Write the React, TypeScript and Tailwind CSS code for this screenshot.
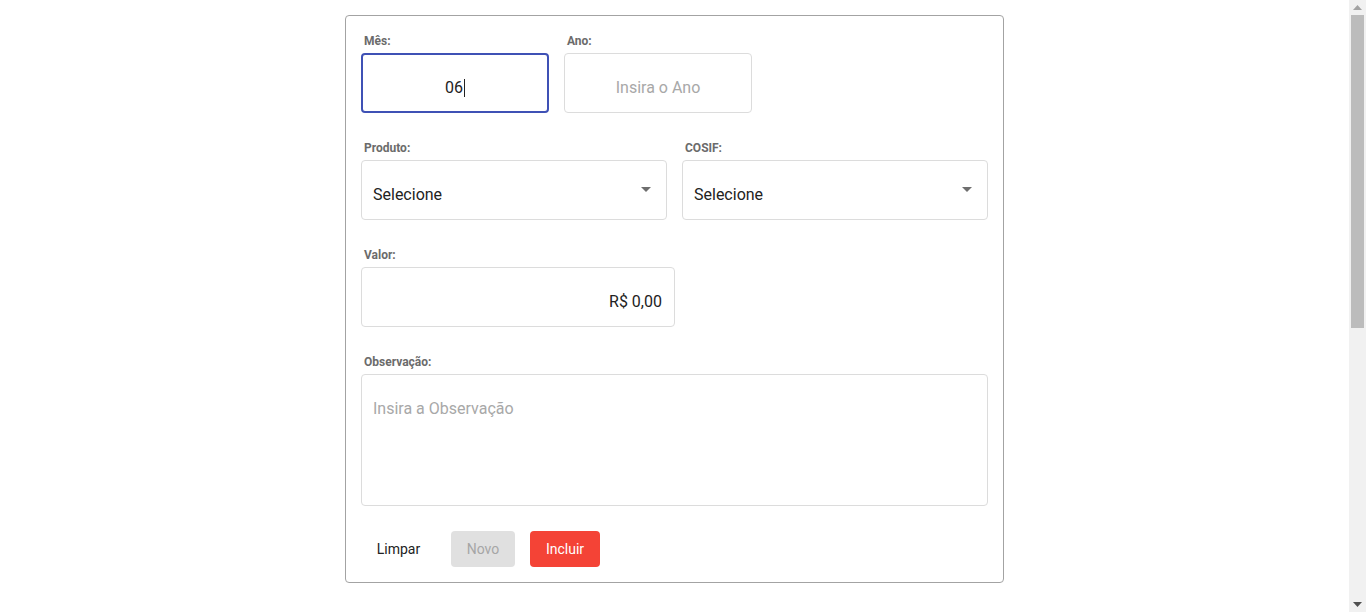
import React from 'react';

const Label = ({ children }: { children: React.ReactNode }) => (
    <div className="text-[12px] leading-[14px] font-bold text-[#6b6b6b] pl-[3px] mb-[5px]">{children}</div>
);

const SelectBox = () => (
    <div className="h-[60px] border border-[#dcdcdc] rounded-[4px] flex items-center justify-between pl-[11px] pr-[15px]">
        <span className="text-[16px] leading-[20px] text-[#222] pt-[10px]">Selecione</span>
        <svg width="10" height="5" viewBox="0 0 10 5" className="mb-[1px]">
            <path d="M0 0 L10 0 L5 5 Z" fill="#6e6e6e" />
        </svg>
    </div>
);

// barra de rolagem desenhada (a janela de referência tem scroll)
const FakeScrollbar = () => (
    <div className="w-[17px] h-full bg-[#f1f1f1] flex flex-col items-center shrink-0">
        <div className="h-[15px] flex items-center justify-center">
            <svg width="9" height="5" viewBox="0 0 9 5"><path d="M0 5 L9 5 L4.5 0 Z" fill="#a3a3a3" /></svg>
        </div>
        <div className="w-[13px] h-[313px] bg-[#bcbcbc]"></div>
        <div className="flex-1"></div>
        <div className="h-[15px] flex items-center justify-center">
            <svg width="9" height="5" viewBox="0 0 9 5"><path d="M0 0 L9 0 L4.5 5 Z" fill="#505050" /></svg>
        </div>
    </div>
);

export default function App() {
    return (
        <div className="h-screen bg-white flex overflow-hidden" style={{ fontFamily: 'Roboto, "Liberation Sans", sans-serif' }}>
            <div className="flex-1 pt-[15px] flex justify-center">
                <div className="w-[659px] h-[568px] border border-[#a3a3a3] rounded-[4px] px-[15px] pt-[18px]">
                    {/* Mês / Ano */}
                    <div className="flex gap-[15px] mb-[28px]">
                        <div className="w-[188px]">
                            <Label>Mês:</Label>
                            <div className="h-[60px] border-2 border-[#3f51b5] rounded-[4px] flex items-center justify-center pt-[10px]">
                                <span className="text-[16px] leading-[20px] text-[#222]">06</span>
                                <span className="w-px h-[18px] bg-[#222] ml-[1px]"></span>
                            </div>
                        </div>
                        <div className="w-[188px]">
                            <Label>Ano:</Label>
                            <input
                                placeholder="Insira o Ano"
                                className="w-full h-[60px] border border-[#dcdcdc] rounded-[4px] text-center text-[16px] leading-[20px] pt-[8px] outline-none placeholder:text-[#a8a8a8]"
                            />
                        </div>
                    </div>

                    {/* Produto / COSIF */}
                    <div className="grid grid-cols-2 gap-[15px] mb-[28px]">
                        <div>
                            <Label>Produto:</Label>
                            <SelectBox />
                        </div>
                        <div>
                            <Label>COSIF:</Label>
                            <SelectBox />
                        </div>
                    </div>

                    {/* Valor */}
                    <div className="w-[314px] mb-[28px]">
                        <Label>Valor:</Label>
                        <input
                            defaultValue="R$ 0,00"
                            className="w-full h-[60px] border border-[#dcdcdc] rounded-[4px] text-right text-[16px] leading-[20px] text-[#222] pt-[8px] pr-[12px] outline-none"
                        />
                    </div>

                    {/* Observação */}
                    <div className="mb-[25px]">
                        <Label>Observação:</Label>
                        <textarea
                            placeholder="Insira a Observação"
                            className="block w-full h-[132px] resize-none border border-[#dcdcdc] rounded-[4px] text-[16px] leading-[20px] pt-[24px] px-[11px] outline-none placeholder:text-[#a8a8a8]"
                        />
                    </div>

                    {/* Botões */}
                    <div className="flex gap-[15px]">
                        <button className="h-[36px] w-[75px] text-[14px] text-[#222] rounded-[4px]">Limpar</button>
                        <button disabled className="h-[36px] w-[64px] text-[14px] text-[#a6a6a6] bg-[#e0e0e0] rounded-[4px]">Novo</button>
                        <button className="h-[36px] w-[70px] text-[14px] text-white bg-[#f44336] rounded-[4px]">Incluir</button>
                    </div>
                </div>
            </div>
            <FakeScrollbar />
        </div>
    );
}
